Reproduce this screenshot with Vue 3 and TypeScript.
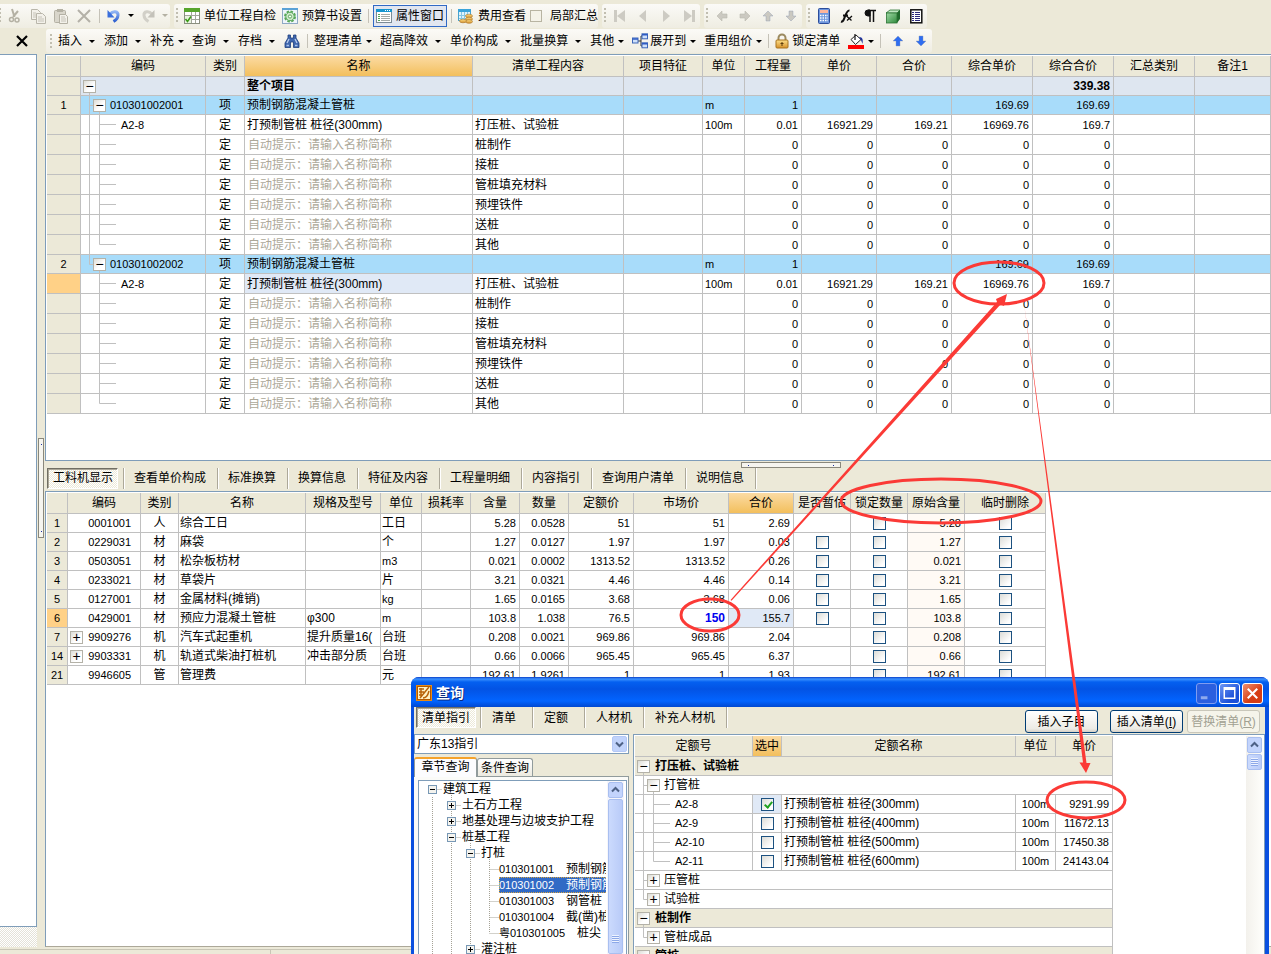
<script setup lang="ts">
interface Row {
  kind: 'root' | 'item' | 'leaf'
  no?: string
  code?: string
  type?: string
  name?: string
  hint?: boolean
  work?: string
  unit?: string
  qty?: string
  price?: string
  total?: string
  cPrice?: string
  cTotal?: string
  outer?: boolean
  last?: boolean
  current?: boolean
}

const works = ['桩制作', '接桩', '管桩填充材料', '预埋铁件', '送桩', '其他']

function section(no: string, code: string, lastSection: boolean): Row[] {
  return [
    { kind: 'item', no, code, type: '项', name: '预制钢筋混凝土管桩', unit: 'm', qty: '1', cPrice: '169.69', cTotal: '169.69', last: lastSection },
    { kind: 'leaf', code: 'A2-8', type: '定', name: '打预制管桩 桩径(300mm)', work: '打压桩、试验桩', unit: '100m', qty: '0.01', price: '16921.29', total: '169.21', cPrice: '16969.76', cTotal: '169.7', outer: !lastSection, current: lastSection },
    ...works.map((work, i): Row => ({
      kind: 'leaf', type: '定', name: '自动提示：请输入名称简称', hint: true, work,
      qty: '0', price: '0', total: '0', cPrice: '0', cTotal: '0',
      outer: !lastSection, last: i === works.length - 1,
    })),
  ]
}

const rows: Row[] = [
  { kind: 'root', name: '整个项目', cTotal: '339.38' },
  ...section('1', '010301002001', false),
  ...section('2', '010301002002', true),
]

function branch(r: { kind: string; last?: boolean; outer?: boolean; open?: boolean }): string {
  if (r.kind === 'root') return 'M8.5 15V20'
  if (r.kind === 'item') return `M8.5 0V${r.last ? 9.5 : 20}M8.5 9.5H12` + (r.open === false ? '' : 'M18.5 15V20')
  return `${r.outer ? 'M8.5 0V20' : ''}M18.5 0V${r.last ? 9.5 : 20}M18.5 9.5H35`
}

const mainCols = ['', '编码', '类别', '名称', '清单工程内容', '项目特征', '单位', '工程量', '单价', '合价', '综合单价', '综合合价', '汇总类别', '备注1']

const detailTabs = ['查看单价构成', '标准换算', '换算信息', '特征及内容', '工程量明细', '内容指引', '查询用户清单', '说明信息']
const resCols = ['', '编码', '类别', '名称', '规格及型号', '单位', '损耗率', '含量', '数量', '定额价', '市场价', '合价', '是否暂估', '锁定数量', '原始含量', '临时删除']

interface Res {
  no: string; code: string; type: string; name: string; spec?: string; unit: string
  nums: string[]; orig: string; est?: boolean; more?: boolean; current?: boolean
}
const resources: Res[] = [
  { no: '1', code: '0001001', type: '人', name: '综合工日', unit: '工日', nums: ['5.28', '0.0528', '51', '51', '2.69'], orig: '5.28' },
  { no: '2', code: '0229031', type: '材', name: '麻袋', unit: '个', nums: ['1.27', '0.0127', '1.97', '1.97', '0.03'], orig: '1.27', est: true },
  { no: '3', code: '0503051', type: '材', name: '松杂板枋材', unit: 'm3', nums: ['0.021', '0.0002', '1313.52', '1313.52', '0.26'], orig: '0.021', est: true },
  { no: '4', code: '0233021', type: '材', name: '草袋片', unit: '片', nums: ['3.21', '0.0321', '4.46', '4.46', '0.14'], orig: '3.21', est: true },
  { no: '5', code: '0127001', type: '材', name: '金属材料(摊销)', unit: 'kg', nums: ['1.65', '0.0165', '3.68', '3.68', '0.06'], orig: '1.65', est: true },
  { no: '6', code: '0429001', type: '材', name: '预应力混凝土管桩', spec: 'φ300', unit: 'm', nums: ['103.8', '1.038', '76.5', '150', '155.7'], orig: '103.8', est: true, current: true },
  { no: '7', code: '9909276', type: '机', name: '汽车式起重机', spec: '提升质量16(', unit: '台班', nums: ['0.208', '0.0021', '969.86', '969.86', '2.04'], orig: '0.208', more: true },
  { no: '14', code: '9903331', type: '机', name: '轨道式柴油打桩机', spec: '冲击部分质', unit: '台班', nums: ['0.66', '0.0066', '965.45', '965.45', '6.37'], orig: '0.66', more: true },
  { no: '21', code: '9946605', type: '管', name: '管理费', unit: '元', nums: ['192.61', '1.9261', '1', '1', '1.93'], orig: '192.61' },
]

interface Node { level: number; text: string; box?: '+' | '-'; through: number[]; end?: boolean; selected?: boolean }
const chapters: Node[] = [
  { level: 0, text: '建筑工程', box: '-', through: [] },
  { level: 1, text: '土石方工程', box: '+', through: [0, 1] },
  { level: 1, text: '地基处理与边坡支护工程', box: '+', through: [0, 1] },
  { level: 1, text: '桩基工程', box: '-', through: [0, 1] },
  { level: 2, text: '打桩', box: '-', through: [0, 1, 2] },
  { level: 3, text: '010301001', through: [0, 1, 2, 3] },
  { level: 3, text: '010301002', through: [0, 1, 2, 3], selected: true },
  { level: 3, text: '010301003', through: [0, 1, 2, 3] },
  { level: 3, text: '010301004', through: [0, 1, 2, 3] },
  { level: 3, text: '粤010301005', through: [0, 1, 2], end: true },
  { level: 2, text: '灌注桩', box: '+', through: [0, 1, 2] },
]
const leafNames: Record<string, string> = {
  '010301001': '预制钢筋',
  '010301002': '预制钢筋',
  '010301003': '钢管桩',
  '010301004': '截(凿)桩',
  '粤010301005': '桩尖',
}
function dots(n: Node): string {
  const v = n.through.map((k) => `M${13.5 + 19 * k} 0V16`).join('')
  const stub = `M${13.5 + 19 * n.level} 8.5h9`
  return v + stub + (n.end ? `M${13.5 + 19 * n.level} 0v8` : '') + (n.box === '-' ? `M${32.5 + 19 * n.level} 14v2` : '')
}

interface Quota { kind: 'root' | 'item' | 'leaf'; text: string; name?: string; price?: string; checked?: boolean; outer?: boolean; last?: boolean; open?: boolean }
const quotas: Quota[] = [
  { kind: 'root', text: '打压桩、试验桩' },
  { kind: 'item', text: '打管桩' },
  { kind: 'leaf', text: 'A2-8', name: '打预制管桩 桩径(300mm)', price: '9291.99', checked: true, outer: true },
  { kind: 'leaf', text: 'A2-9', name: '打预制管桩 桩径(400mm)', price: '11672.13', outer: true },
  { kind: 'leaf', text: 'A2-10', name: '打预制管桩 桩径(500mm)', price: '17450.38', outer: true },
  { kind: 'leaf', text: 'A2-11', name: '打预制管桩 桩径(600mm)', price: '24143.04', outer: true, last: true },
  { kind: 'item', text: '压管桩', open: false },
  { kind: 'item', text: '试验桩', open: false, last: true },
  { kind: 'root', text: '桩制作' },
  { kind: 'item', text: '管桩成品', open: false, last: true },
  { kind: 'root', text: '管桩' },
]
</script>

<template>
  <div class="app">
    <svg class="defs" aria-hidden="true">
      <defs>
        <linearGradient id="g-blue" x1="0" y1="0" x2="0" y2="1"><stop offset="0" stop-color="#8fb4f4" /><stop offset="1" stop-color="#2d5fd0" /></linearGradient>
        <linearGradient id="g-gold" x1="0" y1="0" x2="0" y2="1"><stop offset="0" stop-color="#fde08a" /><stop offset="1" stop-color="#d6912a" /></linearGradient>
        <linearGradient id="g-green" x1="0" y1="0" x2="1" y2="1"><stop offset="0" stop-color="#9ed8a4" /><stop offset="1" stop-color="#2f8a3c" /></linearGradient>
      </defs>
      <symbol id="i-cut" viewBox="0 0 16 16"><path d="M5 1l2.500 8M11 3L6 9" stroke="#b4b1a4" stroke-width="2" fill="none" /><circle cx="4.500" cy="11.500" r="2" fill="none" stroke="#b4b1a4" stroke-width="1.500" /><circle cx="10" cy="12" r="2" fill="none" stroke="#b4b1a4" stroke-width="1.500" /></symbol>
      <symbol id="i-copy" viewBox="0 0 16 16"><g fill="#f3f1ea" stroke="#b9b6aa"><path d="M1.500 1.500h6l3 3v7h-9z" /><path d="M6.500 5.500h6l3 3v7h-9z" /></g><path d="M3 5h3M3 7h3M3 9h3M8 9h4M8 11h6M8 13h6" stroke="#c6c3b8" /></symbol>
      <symbol id="i-paste" viewBox="0 0 16 16"><rect x="1.500" y="2.500" width="11" height="12" rx="1" fill="#d9d6cb" stroke="#b4b1a4" /><rect x="4" y="1" width="6" height="3" fill="#b4b1a4" /><path d="M6.500 6.500h6l2 2v7h-8z" fill="#f3f1ea" stroke="#b4b1a4" /><path d="M8 9h4M8 11h5M8 13h5" stroke="#c6c3b8" /></symbol>
      <symbol id="i-del" viewBox="0 0 16 16"><path d="M2 2l12 12M14 2L2 14" stroke="#b4b1a8" stroke-width="2" /></symbol>
      <symbol id="i-undo" viewBox="0 0 16 16"><path d="M4 6C7 2.500 12.500 3 12 7.500C11.800 10.500 10 12 7.500 13.500" fill="none" stroke="url(#g-blue)" stroke-width="3" /><path d="M1.500 2v7.500h7z" fill="#3a6fdc" /></symbol>
      <symbol id="i-redo" viewBox="0 0 16 16"><path d="M12 6C9 2.500 3.500 3 4 7.500C4.200 10.500 6 12 8.500 13.500" fill="none" stroke="#d2d0c8" stroke-width="3" /><path d="M14.500 2v7.500h-7z" fill="#c4c2ba" /></symbol>
      <symbol id="i-check" viewBox="0 0 16 16"><rect width="16" height="16" fill="#8a8f80" /><rect x="1" y="4" width="14" height="11" fill="#fff" /><rect width="16" height="4" fill="#57a52c" /><path d="M7.500 4v11M11.500 4v11M1 7.500h14M1 11.500h14" stroke="#a3a79a" /><rect x="1" y="8" width="6" height="7" fill="#e8f4df" /><path d="M1.500 11l2 2.500L7 8.500" fill="none" stroke="#3b9a17" stroke-width="1.500" /></symbol>
      <symbol id="i-gear" viewBox="0 0 16 16"><rect x=".5" y=".5" width="15" height="15" fill="#eef5fb" stroke="#8fa9c4" /><rect width="16" height="2" fill="#5aa2d6" /><circle cx="8" cy="8.500" r="5" fill="none" stroke="#58a858" stroke-width="2" stroke-dasharray="2.500 1.400" /><circle cx="8" cy="8.500" r="4.200" fill="#cfe9cb" stroke="#58a858" /><circle cx="8" cy="8.500" r="1.600" fill="#fff" stroke="#58a858" /></symbol>
      <symbol id="i-prop" viewBox="0 0 16 16"><rect x=".5" y="1.500" width="15" height="13" fill="#fff" stroke="#7b8b96" /><rect y="1" width="16" height="3" fill="#1795cf" /><path d="M2 6.500h2M2 8.500h2M2 10.500h2M2 12.500h2" stroke="#54a854" /><path d="M5 6.500h9M5 8.500h9M5 10.500h9M5 12.500h9" stroke="#a4aaa7" /><path d="M9 2.500h1M11 2.500h1M13 2.500h1" stroke="#fff" /></symbol>
      <symbol id="i-fee" viewBox="0 0 16 16"><rect x=".5" y="1.500" width="12" height="11" fill="#dff3fb" stroke="#4aa3cf" /><rect y="1" width="13" height="3" fill="#3aa4da" /><path d="M3.500 4v8M6.500 4v8M9.500 4v8M1 7.500h11M1 10.500h11" stroke="#86c6e3" /><ellipse cx="11" cy="8" rx="3.500" ry="1.800" fill="url(#g-gold)" stroke="#a9762a" stroke-width=".6" /><ellipse cx="11" cy="11" rx="3.500" ry="1.800" fill="url(#g-gold)" stroke="#a9762a" stroke-width=".6" /><ellipse cx="11" cy="13.500" rx="3.500" ry="1.800" fill="url(#g-gold)" stroke="#a9762a" stroke-width=".6" /><ellipse cx="5" cy="13" rx="3.500" ry="1.800" fill="url(#g-gold)" stroke="#a9762a" stroke-width=".6" /></symbol>
      <symbol id="i-first" viewBox="0 0 16 16"><path d="M3.500 2v12" stroke="#cdcbc3" stroke-width="3" /><path d="M13 2v12L5 8z" fill="#cdcbc3" /></symbol>
      <symbol id="i-prev" viewBox="0 0 16 16"><path d="M11 2v12L4 8z" fill="#cdcbc3" /></symbol>
      <symbol id="i-next" viewBox="0 0 16 16"><path d="M5 2v12l7-6z" fill="#cdcbc3" /></symbol>
      <symbol id="i-last" viewBox="0 0 16 16"><path d="M12.500 2v12" stroke="#cdcbc3" stroke-width="3" /><path d="M3 2v12l8-6z" fill="#cdcbc3" /></symbol>
      <symbol id="i-left" viewBox="0 0 16 16"><path d="M3 8l5-5v3h5v4H8v3z" fill="#cbc9c1" stroke="#bbb8ae" stroke-width=".6" /></symbol>
      <symbol id="i-right" viewBox="0 0 16 16"><path d="M13 8L8 3v3H3v4h5v3z" fill="#cbc9c1" stroke="#bbb8ae" stroke-width=".6" /></symbol>
      <symbol id="i-up" viewBox="0 0 16 16"><path d="M8 3l5 5h-3v5H6V8H3z" fill="currentColor" stroke="#8a97b0" stroke-width=".4" /></symbol>
      <symbol id="i-down" viewBox="0 0 16 16"><path d="M8 13l5-5h-3V3H6v5H3z" fill="currentColor" stroke="#8a97b0" stroke-width=".4" /></symbol>
      <symbol id="i-calc" viewBox="0 0 16 16"><rect x="2.500" y=".5" width="11" height="15" rx="1" fill="#6e96dd" stroke="#2b4c9b" /><rect x="4" y="2" width="8" height="3" fill="#ffb59a" /><path d="M4 7.500h8M4 10h8M4 12.500h8" stroke="#fff" stroke-width="1.500" stroke-dasharray="1.500 1" /></symbol>
      <symbol id="i-fx" viewBox="0 0 16 16"><path d="M2 13.500C6 15 6 2 10.500 2.500M4 7.500h5" fill="none" stroke="#111" stroke-width="2" /><path d="M7.500 8l5 4.500M13 8l-5 4.500" stroke="#111" stroke-width="1.300" /></symbol>
      <symbol id="i-para" viewBox="0 0 16 16"><path d="M8 2H6a3 3 0 000 6h2z" fill="#111" stroke="#111" /><path d="M6 2.500h8M8 2v12M11.500 2v12" fill="none" stroke="#111" stroke-width="1.500" /></symbol>
      <symbol id="i-cube" viewBox="0 0 16 16"><path d="M1 5l4-3h10l-3 3z" fill="#bfe6c2" stroke="#2b7334" stroke-width=".8" /><path d="M15 2v9l-3 4V5z" fill="#1f6a2c" /><rect x="1.500" y="5" width="10.500" height="10" fill="url(#g-green)" stroke="#2b7334" stroke-width=".8" /></symbol>
      <symbol id="i-list" viewBox="0 0 16 16"><rect x="2.800" y="1.800" width="11" height="13" fill="#fff" stroke="#111" stroke-width="1.500" /><path d="M4 4.500h2M7 4.500h5M4 6.500h2M7 6.500h5M4 8.500h2M7 8.500h5M4 10.500h2M7 10.500h5M4 12.500h2M7 12.500h5" stroke="#2a2a7a" /></symbol>
      <symbol id="i-find" viewBox="0 0 16 16"><path d="M4 2h2.500v3H9.500V2H12v3l3 5v4.500h-5.500V9h-3v5.500H1V10l3-5z" fill="#3f66ad" stroke="#1e3f7d" stroke-width=".8" /><path d="M3 10l2-4M11 6l2 4" stroke="#b9cdee" stroke-width="1.300" /><path d="M2.500 12.500h2.500M11 12.500h2.500" stroke="#a9c1ea" stroke-width="1.500" /></symbol>
      <symbol id="i-tree" viewBox="0 0 16 16"><path d="M5 8h4V3h3M9 8v5h3" fill="none" stroke="#333" /><g fill="#cfe0fa" stroke="#3c66b8"><rect x=".5" y="5" width="5.500" height="5" /><rect x="10" y=".8" width="5.500" height="5" /><rect x="10" y="9.800" width="5.500" height="5" /></g><path d="M1 6h5M10 1.800h5.500M10 10.800h5.500" stroke="#2e5bc4" stroke-width="1.500" /></symbol>
      <symbol id="i-lock" viewBox="0 0 16 16"><path d="M4.500 8V5a3.500 3.500 0 017 0v3" fill="none" stroke="#9b8a60" stroke-width="2" /><rect x="2" y="7" width="12" height="8" rx="1" fill="url(#g-gold)" stroke="#a87420" /><path d="M8 9v4M6.500 10.500h3" stroke="#5c3d0c" /></symbol>
      <symbol id="i-fill" viewBox="0 0 16 16"><rect y="12" width="16" height="4" fill="#f00" /><path d="M3 6.500L8 2l5 4.500-5.500 5z" fill="#fff" stroke="#222" /><path d="M7 1v6" stroke="#222" stroke-width="1.300" /><path d="M11 4c4 0 4 3 3.500 7L13 7z" fill="#1c2f9c" /></symbol>
    </svg>

    <div class="bar top">
      <div class="group edge">
        <i class="grip" />
        <button class="ib" aria-label="剪切"><svg><use href="#i-cut" /></svg></button>
        <button class="ib" aria-label="复制"><svg><use href="#i-copy" /></svg></button>
        <button class="ib" aria-label="粘贴"><svg><use href="#i-paste" /></svg></button>
        <button class="ib" aria-label="删除"><svg><use href="#i-del" /></svg></button>
        <i class="sep" />
        <button class="ib slim" aria-label="撤销"><svg><use href="#i-undo" /></svg></button>
        <i class="drop" />
        <button class="ib slim" aria-label="重做"><svg><use href="#i-redo" /></svg></button>
        <i class="drop dim" />
      </div>
      <div class="group spaced">
        <i class="grip" />
        <button class="tb"><svg><use href="#i-check" /></svg>单位工程自检</button>
        <button class="tb"><svg><use href="#i-gear" /></svg>预算书设置</button>
        <i class="sep" />
        <button class="tb active"><svg><use href="#i-prop" /></svg>属性窗口</button>
        <i class="sep" />
        <button class="tb"><svg><use href="#i-fee" /></svg>费用查看</button>
        <label class="opt"><input type="checkbox" class="flat" />局部汇总</label>
      </div>
      <div class="group">
        <i class="grip" />
        <button v-for="n in ['first', 'prev', 'next', 'last']" :key="n" class="ib" :aria-label="n"><svg><use :href="'#i-' + n" /></svg></button>
      </div>
      <div class="group grey">
        <i class="grip" />
        <button v-for="n in ['left', 'right', 'up', 'down']" :key="n" class="ib" :aria-label="n"><svg><use :href="'#i-' + n" /></svg></button>
      </div>
      <div class="group">
        <i class="grip" />
        <button v-for="n in ['calc', 'fx', 'para', 'cube', 'list']" :key="n" class="ib" :aria-label="n"><svg><use :href="'#i-' + n" /></svg></button>
      </div>
    </div>

    <div class="bar second">
      <button class="close-pane" aria-label="关闭"><svg viewBox="0 0 12 12"><path d="M1 1l10 10M11 1L1 11" stroke="#000" stroke-width="2.200" /></svg></button>
      <div class="group">
        <i class="grip wide" />
        <button class="menu">插入<i class="caret" /></button>
        <button class="menu">添加<i class="caret" /></button>
        <button class="menu">补充<i class="caret near" /></button>
        <button class="menu">查询<i class="caret" /></button>
        <button class="menu">存档<i class="caret" /></button>
        <button class="menu" aria-label="查找"><svg><use href="#i-find" /></svg></button>
        <i class="sep wide" />
        <button class="menu">整理清单<i class="caret near" /></button>
        <button class="menu">超高降效<i class="caret" /></button>
        <button class="menu">单价构成<i class="caret" /></button>
        <button class="menu">批量换算<i class="caret" /></button>
        <button class="menu">其他<i class="caret near" /></button>
        <button class="menu"><svg class="lead"><use href="#i-tree" /></svg>展开到<i class="caret near" /></button>
        <button class="menu">重用组价<i class="caret end" /></button>
        <i class="sep" />
        <button class="menu"><svg class="lead"><use href="#i-lock" /></svg>锁定清单</button>
        <button class="menu fill" aria-label="颜色"><svg><use href="#i-fill" /></svg><i class="caret end" /></button>
        <i class="sep" />
        <button class="ib blue" aria-label="上移"><svg><use href="#i-up" /></svg></button>
        <button class="ib blue" aria-label="下移"><svg><use href="#i-down" /></svg></button>
      </div>
    </div>

    <div class="body">
      <aside class="side"><div class="side-page" /><div class="hatch" /></aside>
      <div class="gutter"><i class="handle v" /></div>
      <main class="work">
        <section class="panel first">
          <table class="grid">
            <colgroup>
              <col class="c34"><col class="c125"><col class="c39"><col class="c228"><col class="c151"><col class="c79"><col class="c42"><col class="c57"><col class="c75"><col class="c75"><col class="c81"><col class="c81"><col class="c81"><col>
            </colgroup>
            <thead>
              <tr><th v-for="(c, i) in mainCols" :key="i" :class="{ hot: c === '名称' }">{{ c }}</th></tr>
            </thead>
            <tbody>
              <tr v-for="(r, i) in rows" :key="i" :class="[r.kind, { tall: r.kind === 'leaf' }]">
                <td class="rh" :class="{ cur: r.current }">{{ r.no }}</td>
                <td class="tc">
                  <div class="tree">
                    <svg class="lines" width="40" height="20"><path :d="branch(r)" /></svg>
                    <button v-if="r.kind !== 'leaf'" class="exp" aria-label="折叠">−</button>
                    <span class="num">{{ r.code }}</span>
                  </div>
                </td>
                <td class="ctr">{{ r.type }}</td>
                <td :class="{ hint: r.hint, sel: r.current }">{{ r.name }}</td>
                <td>{{ r.work }}</td>
                <td />
                <td class="num">{{ r.unit }}</td>
                <td class="num rt">{{ r.qty }}</td>
                <td class="num rt">{{ r.price }}</td>
                <td class="num rt">{{ r.total }}</td>
                <td class="num rt">{{ r.cPrice }}</td>
                <td class="num rt">{{ r.cTotal }}</td>
                <td /><td />
              </tr>
            </tbody>
          </table>
        </section>

        <nav class="tabs">
          <button class="tab on">工料机显示</button>
          <i class="tabsep" />
          <button v-for="t in detailTabs" :key="t" class="tab">{{ t }}</button>
          <i class="handle h" />
        </nav>

        <section class="panel second-panel">
          <table class="grid res">
            <colgroup>
              <col class="c21"><col class="c73"><col class="c38"><col class="c127"><col class="c75"><col class="c41"><col class="c49"><col class="c49"><col class="c49"><col class="c65"><col class="c95"><col class="c65"><col class="c57"><col class="c57"><col class="c57"><col class="c81">
            </colgroup>
            <thead>
              <tr><th v-for="(c, i) in resCols" :key="i" :class="{ hot: c === '合价' }">{{ c }}</th></tr>
            </thead>
            <tbody>
              <tr v-for="r in resources" :key="r.no">
                <td class="rh" :class="{ cur: r.current }">{{ r.no }}</td>
                <td><div class="code"><button v-if="r.more" class="exp" aria-label="展开">+</button><span class="num">{{ r.code }}</span></div></td>
                <td class="ctr">{{ r.type }}</td>
                <td>{{ r.name }}</td>
                <td>{{ r.spec }}</td>
                <td :class="{ num: /[a-z]/.test(r.unit) }">{{ r.unit }}</td>
                <td />
                <td v-for="(n, k) in r.nums" :key="k" class="num rt" :class="{ edited: r.current && k === 3, sel: r.current && k === 4 }">{{ n }}</td>
                <td class="ctr"><input v-if="r.est" type="checkbox" aria-label="是否暂估"></td>
                <td class="ctr"><input type="checkbox" aria-label="锁定数量"></td>
                <td class="num rt warm">{{ r.orig }}</td>
                <td class="ctr"><input type="checkbox" aria-label="临时删除"></td>
              </tr>
            </tbody>
          </table>
        </section>
      </main>
    </div>
    <footer class="status"><i /><i /></footer>

    <div class="dialog" role="dialog" aria-label="查询">
      <header class="title">
        <svg class="logo" viewBox="0 0 16 16"><rect width="16" height="16" fill="#e98a12" /><rect x="1.500" y="1.500" width="13" height="13" fill="#fff2c4" stroke="#b35a00" /><path d="M3 4h5M3 7h5M3 10h4M4 13l9-11M7 13c3 0 5-3 6-7M5 3v8" stroke="#b8630a" stroke-width="1.500" fill="none" /></svg>
        <h1>查询</h1>
        <button class="win off" aria-label="最小化"><svg viewBox="0 0 20 20"><path d="M4 14.500h7" stroke="#8ea9ee" stroke-width="3" /></svg></button>
        <button class="win" aria-label="最大化"><svg viewBox="0 0 20 20"><path d="M4.500 4h11v11h-11zM4.500 5.500h11" fill="none" stroke="#fff" stroke-width="1.600" /></svg></button>
        <button class="win red" aria-label="关闭"><svg viewBox="0 0 20 20"><path d="M5 5l10 10M15 5L5 15" stroke="#fff" stroke-width="2.200" /></svg></button>
      </header>
      <div class="dlg-body">
        <div class="dlg-bar">
          <button class="tab on">清单指引</button>
          <i class="tabsep" />
          <button class="tab short">清单</button>
          <button class="tab short">定额</button>
          <button class="tab">人材机</button>
          <button class="tab">补充人材机</button>
          <span class="grow" />
          <button class="xp gap">插入子目</button>
          <button class="xp">插入清单(<u>I</u>)</button>
          <button class="xp" disabled>替换清单(<u>R</u>)</button>
        </div>
        <div class="dlg-main">
          <div class="nav">
            <div class="combo">
              <select aria-label="指引"><option>广东13指引</option></select>
              <svg viewBox="0 0 15 16"><rect x=".5" y=".5" width="14" height="15" rx="1.500" fill="#c1d3fb" stroke="#b4c8f6" /><path d="M4 6.500l3.500 3.500L11 6.500" fill="none" stroke="#4d6185" stroke-width="2" /></svg>
            </div>
            <div class="page-tabs"><button class="pt on">章节查询</button><button class="pt">条件查询</button></div>
            <div class="page">
              <div class="treebox">
                <ul>
                  <li v-for="n in chapters" :key="n.text" :class="'l' + n.level">
                    <svg class="dots" width="110" height="16"><path :d="dots(n)" /></svg>
                    <button v-if="n.box" class="tiny" :aria-label="n.text"><svg viewBox="0 0 9 9"><rect x=".5" y=".5" width="8" height="8" fill="#f4f3ee" stroke="#7898b5" /><path :d="n.box === '+' ? 'M2 4.5h5M4.500 2v5' : 'M2 4.5h5'" stroke="#000" /></svg></button>
                    <span class="label" :class="{ picked: n.selected }"><template v-if="n.level === 3"><span class="num">{{ n.text }}</span><span class="leafname">{{ leafNames[n.text] }}</span></template><template v-else>{{ n.text }}</template></span>
                  </li>
                </ul>
                <div class="scroll">
                  <svg class="sbtn" viewBox="0 0 15 16"><rect x=".5" y=".5" width="14" height="15" rx="1.500" fill="#c3d4fc" stroke="#a9bff0" /><path d="M4 9.500L7.500 6 11 9.500" fill="none" stroke="#4d6185" stroke-width="2" /></svg>
                  <div class="thumb"><i /></div>
                </div>
              </div>
            </div>
          </div>
          <div class="panel quota">
            <table class="grid q">
              <colgroup><col class="c118"><col class="c29"><col class="c234"><col class="c40"><col class="c57"></colgroup>
              <thead><tr><th>定额号</th><th class="hot">选中</th><th>定额名称</th><th>单位</th><th>单价</th></tr></thead>
              <tbody>
                <tr v-for="q in quotas" :key="q.text" :class="'q' + q.kind">
                  <td :colspan="q.kind === 'leaf' ? 1 : 5" class="tc" :class="q.kind">
                    <div class="tree">
                      <svg class="lines" width="40" height="20"><path :d="branch(q)" /></svg>
                      <button v-if="q.kind !== 'leaf'" class="exp" :aria-label="q.text">{{ q.open === false ? '+' : '−' }}</button>
                      <span :class="{ num: q.kind === 'leaf' }">{{ q.text }}</span>
                    </div>
                  </td>
                  <template v-if="q.kind === 'leaf'">
                    <td class="ctr" :class="{ sel: q.checked }"><input type="checkbox" :checked="q.checked" :aria-label="q.text"></td>
                    <td>{{ q.name }}</td>
                    <td class="num ctr">100m</td>
                    <td class="num rt">{{ q.price }}</td>
                  </template>
                </tr>
              </tbody>
            </table>
            <div class="scroll pale">
              <svg class="sbtn" viewBox="0 0 15 16"><rect x=".5" y=".5" width="14" height="15" rx="1.500" fill="#c3d4fc" stroke="#a9bff0" /><path d="M4 9.500L7.500 6 11 9.500" fill="none" stroke="#4d6185" stroke-width="2" /></svg>
              <div class="thumb small"><i /></div>
            </div>
          </div>
        </div>
      </div>
    </div>

    <svg class="marks" width="1271" height="954" aria-hidden="true">
      <g fill="none" stroke="#fb3a36" stroke-width="3">
        <ellipse cx="999" cy="283" rx="45" ry="21" />
        <ellipse cx="710" cy="615" rx="29" ry="16" />
        <ellipse cx="941" cy="501" rx="100" ry="22" />
        <ellipse cx="1086" cy="800" rx="39" ry="18" />
      </g>
      <g fill="#fb3a36">
        <path d="M730.500 600L997 302 996 299l11-5-3 12-3.500-1.500L731.500 600.800z" />
        <path d="M1024 303L1086.500 763h4l-4.500 10-6.500-10.500h3.500z" />
      </g>
    </svg>
  </div>
</template>

<style>
html, body { margin: 0; background: #ece9d8; }
</style>

<style scoped>
* { box-sizing: border-box; }
.app { position: relative; display: flex; flex-direction: column; width: 100%; height: 100vh; overflow: hidden; background: #ece9d8; color: #000; font: 12px/16px "Liberation Sans", "Noto Sans CJK SC", sans-serif; }
button { padding: 0; border: 0; background: none; color: inherit; font: inherit; white-space: nowrap; flex: none; }
.defs { position: absolute; width: 0; height: 0; }
.num { font-size: 11px; }

.bar { display: flex; align-items: center; flex: none; }
.top { height: 28px; gap: 4px; padding-top: 3px; }
.second { height: 26px; }
.bar svg { width: 16px; height: 16px; flex: none; }
.group { display: flex; align-items: center; height: 24px; flex: none; background: linear-gradient(#fbfaf7, #efede2); border-radius: 3px; }
.edge { margin-left: -3px; width: 173px; }
.spaced { gap: 2px; }
.grip { flex: none; width: 6px; height: 15px; background: repeating-linear-gradient(#c1beb0 0 2px, transparent 2px 4px) center / 2px 15px no-repeat; }
.grip.wide { width: 12px; background-position: 4px 0; }
.sep { flex: none; width: 5px; height: 14px; background: linear-gradient(#c5c2b8, #c5c2b8) center / 1px 14px no-repeat; }
.edge .sep { width: 9px; }
.sep.wide { width: 14px; }
.second .sep:not(.wide) { width: 11px; }
.ib { display: flex; justify-content: center; align-items: center; width: 23px; height: 22px; }
.ib.slim { width: 20px; }
.grey { color: #cbc9c1; }
.blue { color: #2f6df0; }
.drop { width: 14px; display: flex; justify-content: center; flex: none; }
.drop::after, .caret::after { content: ""; border: 3px solid transparent; border-top-color: #000; border-bottom: 0; }
.dim::after { border-top-color: #b4b1a4; }
.tb { display: flex; align-items: center; gap: 4px; padding: 0 2px; height: 22px; }
.active { border: 1px solid #316ac5; background: #e1e6f0; }
.opt { display: flex; align-items: center; gap: 8px; }
.flat { appearance: none; width: 12px; height: 12px; margin: 0; border: 1px solid #b8b4a2; background: #f4f2e8; }
.close-pane { width: 46px; height: 20px; }
.close-pane svg { width: 12px; height: 12px; display: block; margin-left: 16px; }
.menu { display: flex; align-items: center; }
.caret { display: flex; width: 7px; margin: 0 8px 0 7px; }
.near { margin: 0 7px 0 4px; }
.end { margin: 0 0 0 4px; }
.lead { margin-right: 2px; }
.fill { margin-left: 8px; }

.body { display: flex; flex: 1; min-height: 0; }
.side { width: 37px; flex: none; display: flex; flex-direction: column; }
.side-page { flex: 1; background: #fff; border: solid #7f9db9; border-width: 1px 1px 1px 0; }
.hatch { height: 20px; background: repeating-conic-gradient(#fff 0 25%, #e4e2d8 0 50%) 0 0 / 2px 2px; }
.gutter { position: relative; width: 8px; flex: none; }
.work { flex: 1; min-width: 0; display: flex; flex-direction: column; }
.panel { background: #fff; border: 1px solid #7f9db9; border-right: 0; padding: 1px 0 0 1px; overflow: hidden; }
.first { flex: none; padding-bottom: 46px; }
.second-panel { flex: 1; min-height: 0; border-bottom-color: #aca899; }
.handle { position: absolute; display: flex; justify-content: space-between; align-items: center; padding: 5px 1px; border: 1px solid #8a887c; background: #f6f5ef; }
.handle::before, .handle::after { content: ""; width: 1px; height: 1px; background: #1c2f9c; }
.handle.v { left: 1px; top: 384px; width: 6px; height: 100px; flex-direction: column; }
.handle.h { right: 430px; top: 1px; width: 100px; height: 6px; padding: 0 6px; }

.grid { table-layout: fixed; width: 100%; border-collapse: separate; border-spacing: 0; }
.res { width: 999px; }
.q { width: 478px; }
.c21 { width: 21px; } .c29 { width: 29px; } .c34 { width: 34px; } .c38 { width: 38px; } .c39 { width: 39px; } .c40 { width: 40px; } .c41 { width: 41px; } .c42 { width: 42px; } .c49 { width: 49px; } .c57 { width: 57px; } .c65 { width: 65px; } .c73 { width: 73px; } .c75 { width: 75px; } .c79 { width: 79px; } .c81 { width: 81px; } .c95 { width: 95px; } .c118 { width: 118px; } .c125 { width: 125px; } .c127 { width: 127px; } .c151 { width: 151px; } .c228 { width: 228px; } .c234 { width: 234px; }
th, td { padding: 0; border: solid #c0c0c0; border-width: 0 1px 1px 0; white-space: nowrap; overflow: hidden; }
th { height: 21px; background: #ece9d8; font-weight: 400; text-align: center; }
th.hot { background: linear-gradient(#fbdba4, #f3bf5c); }
td { height: 19px; padding-left: 2px; line-height: 16px; }
.res td:not(.ctr):not(.rh) { padding-left: 1px; }
.tall td { height: 20px; }
td.ctr, td.rh { text-align: center; padding: 0; }
td.rt { text-align: right; padding: 0 3px 0 0; }
td.rh { background: #ece9d8; font-size: 11px; }
td.rh.cur { background: #ffd187; }
.root td:not(.rh) { background: #dee6f0; font-weight: 700; }
.item td:not(.rh) { background: #a8dcfa; }
.root td.num { font-size: 12px; }
td.hint { color: #aca899; padding-left: 3px; }
td.sel { background: #e0e9f6; }
td.warm { background: #fffaf5; }
td.edited { color: #0000f0; font-weight: 700; font-size: 12px; }
td.tc { padding: 0; }
.tree { position: relative; display: flex; align-items: center; height: 18px; }
.tall .tree { height: 19px; }
.lines { position: absolute; left: 0; top: 0; fill: none; stroke: #c0c0c0; }
.exp { position: relative; width: 13px; height: 13px; border: 1px solid #b4b2a8; background: linear-gradient(135deg, #dcdcd6, #fff 60%); font-size: 14px; font-weight: 400; line-height: 10px; display: flex; align-items: center; justify-content: center; }
.root .exp, .qroot .exp { margin: 0 5px 0 2px; }
.item .exp, .qitem .exp { margin: 0 4px 0 12px; }
.leaf .tree, .qleaf .tree { padding-left: 40px; }
.code { position: relative; display: flex; align-items: center; justify-content: flex-end; gap: 5px; padding-right: 9px; }
input[type="checkbox"]:not(.flat) { appearance: none; display: block; margin: 1px auto 0; width: 13px; height: 13px; border: 1px solid #1c5180; background: linear-gradient(135deg, #dcdcd7, #fff 80%); }
input[type="checkbox"]:checked::after { content: ""; display: block; width: 3px; height: 6px; margin: 1px 0 0 4px; border: solid #21a121; border-width: 0 2px 2px 0; transform: rotate(40deg); }

.tabs { position: relative; display: flex; align-items: center; height: 30px; flex: none; padding: 6px 0 2px 2px; }
.tab { height: 21px; padding: 0 10px; border-right: 1px solid #aca899; box-shadow: 1px 0 #fff; margin-right: 1px; }
.tabs .tab:not(.on) { padding-right: 11px; padding-left: 9px; }
.tab.on { padding: 0 5px; border: 1px solid #fff; border-top-color: #716f64; border-left-color: #716f64; box-shadow: inset 1px 1px #aca899; background: repeating-conic-gradient(#fff 0 25%, #ece9d8 0 50%) 0 0 / 2px 2px; margin: 0; width: 71px; }
.tabsep { width: 6px; height: 21px; border-right: 1px solid #aca899; box-shadow: 1px 0 #fff; margin-right: 1px; }
.status { flex: none; height: 7px; display: flex; border-top: 2px solid #ece9d8; }
.status i { width: 271px; border: solid #c9c6b6; border-width: 1px 1px 0 0; }

.dialog { position: absolute; left: 411px; right: 2px; top: 677px; bottom: 0; display: flex; flex-direction: column; overflow: hidden; border-radius: 8px 8px 0 0; background: #0a50e0; padding: 0 4px 0 3px; }
.title { display: flex; align-items: center; gap: 2px; height: 30px; flex: none; margin: 0 -4px 0 -3px; padding: 2px 6px 0 5px; background: linear-gradient(#0a3fc8 0, #3c92ff 2px, #0460f0 5px, #0353e4 12px, #0264ff 24px, #0148d0 30px); }
.logo { width: 16px; height: 16px; }
h1 { flex: 1; margin: 0 0 0 2px; font-size: 14px; line-height: 20px; color: #fff; text-shadow: 1px 1px #0a2a80; }
.win { width: 21px; height: 21px; border: 1px solid #fff; border-radius: 3px; background: linear-gradient(135deg, #6f97f4, #1b50d8 70%); }
.win svg { display: block; width: 19px; height: 19px; }
.win.off { border-color: #7f9cf0; background: #2b5fdf; }
.win.red { background: linear-gradient(135deg, #f09070, #d63d14 60%); }
.dlg-body { flex: 1; min-height: 0; display: flex; flex-direction: column; background: #ece9d8; }
.dlg-bar { display: flex; align-items: flex-start; height: 27px; flex: none; padding: 0 5px 0 2px; }
.dlg-bar .tab.on { width: 60px; }
.dlg-bar .tabsep { width: 5px; }
.short { width: 51px; padding: 0 6px 0 0; }
.dlg-bar .tab:not(.on):not(.short) { padding: 0 11px 0 10px; }
.grow { flex: 1; }
.xp { width: 73px; height: 23px; margin: 3px 0 0 4px; border: 1px solid #003c74; border-radius: 3px; background: linear-gradient(#fff, #ecebe5 85%, #d6d0c5); }
.xp.gap { margin-right: 8px; }
.xp:disabled { border-color: #c9c7ba; background: #f5f4ea; color: #a1a192; }
.dlg-main { flex: 1; min-height: 0; display: flex; gap: 4px; }
.nav { width: 215px; flex: none; display: flex; flex-direction: column; }
.combo { position: relative; height: 20px; flex: none; }
.combo select { appearance: none; width: 100%; height: 20px; padding: 0 2px; border: 1px solid #7f9db9; border-radius: 0; background: #fff; color: #000; font: inherit; }
.combo svg { position: absolute; right: 2px; top: 2px; width: 15px; height: 16px; pointer-events: none; }
.page-tabs { display: flex; align-items: flex-end; height: 22px; flex: none; }
.pt { height: 18px; width: 56px; border: 1px solid #919b9c; border-bottom: 0; border-radius: 3px 3px 0 0; background: linear-gradient(#fff, #eceae0); }
.pt.on { position: relative; width: 63px; height: 20px; border-top: 2px solid #f5a32c; background: #fcfcfe; margin-bottom: -1px; padding-bottom: 2px; }
.page { flex: 1; min-height: 0; border: solid #919b9c; border-width: 1px 1px 0 0; padding: 3px 1px 0 4px; background: #fbfbf8; display: flex; }
.treebox { flex: 1; min-width: 0; display: flex; border: 1px solid #7f9db9; border-bottom: 0; background: #fff; padding: 0 2px 0 0; overflow: hidden; }
ul { flex: 1; min-width: 0; overflow: hidden; margin: 0; padding: 0; list-style: none; }
li { position: relative; display: flex; align-items: center; height: 16px; white-space: nowrap; }
.dots { position: absolute; left: 0; top: 0; fill: none; stroke: #a5a296; stroke-dasharray: 1 1; }
.tiny { position: relative; width: 9px; height: 9px; margin-right: 6px; }
.tiny svg { display: block; width: 9px; height: 9px; }
.l0 { padding-left: 9px; } .l1 { padding-left: 28px; } .l2 { padding-left: 47px; } .l3 { padding-left: 80px; }
.label { position: relative; line-height: 16px; }
.leafname { margin-left: 12px; }
.picked { background: #316ac5; color: #fff; outline: 1px dotted #d9a441; outline-offset: -1px; }
.scroll { width: 17px; flex: none; margin-left: 1px; background: #f6f6fb; display: flex; flex-direction: column; align-items: center; gap: 1px; padding-top: 1px; }
.sbtn { width: 15px; height: 16px; flex: none; }
.thumb { width: 15px; flex: 1; display: flex; justify-content: center; align-items: flex-end; border: 1px solid #a9bff0; border-radius: 2px; background: linear-gradient(90deg, #cbdafd, #b9cbf8); padding-bottom: 10px; }
.thumb i { width: 7px; height: 8px; background: repeating-linear-gradient(#eef3ff 0 1px, #8ca8e8 1px 2px); }
.thumb.small { flex: none; height: 16px; padding-bottom: 3px; }
.quota { flex: 1; min-width: 0; display: flex; justify-content: space-between; align-items: flex-start; border-right: 1px solid #7f9db9; padding-right: 1px; border-bottom: 0; }
.quota .scroll { align-self: stretch; }
.pale { background: linear-gradient(90deg, #f3f1ec, #fefefb); }
.qroot td { background: #ece9d8; font-weight: 700; }
.q .item { background: #fff; }
.marks { position: absolute; left: 0; top: 0; pointer-events: none; }
</style>
